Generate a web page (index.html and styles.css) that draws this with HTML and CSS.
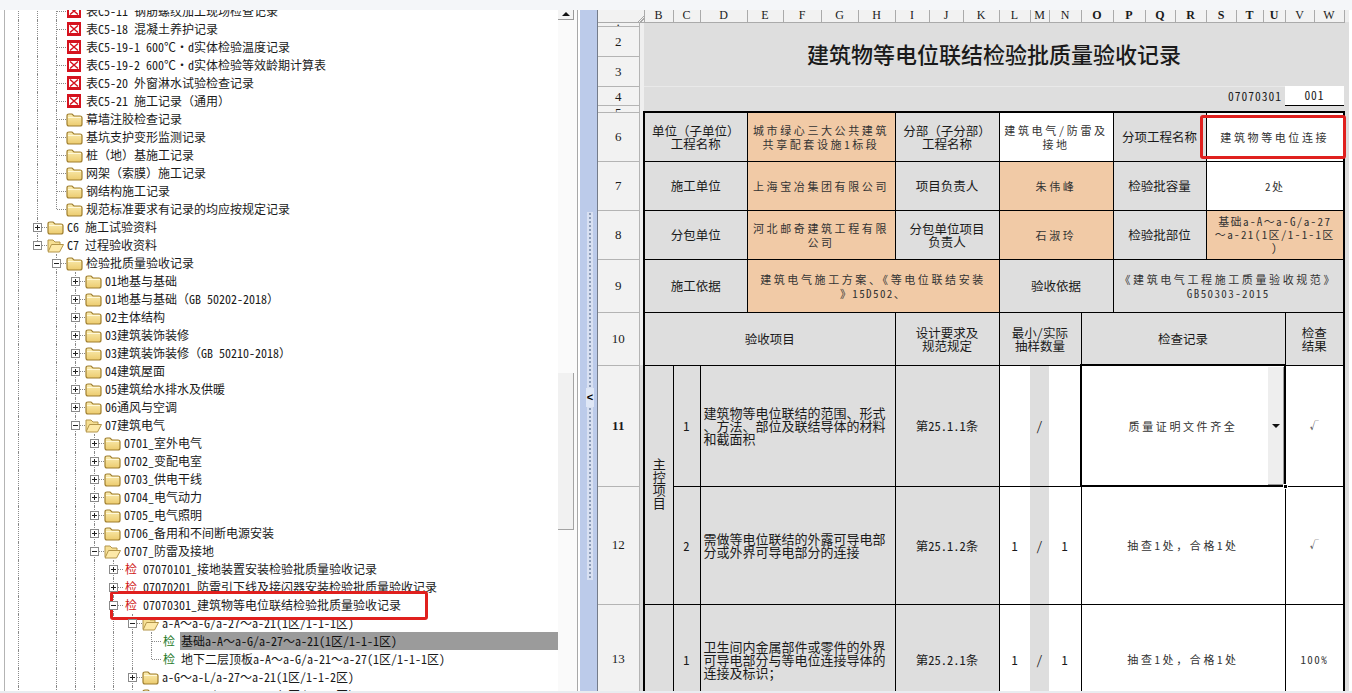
FILE: index.html
```html
<!DOCTYPE html>
<html lang="zh">

<head>
  <meta charset="utf-8">
  <title>检验批质量验收记录</title>
  <link rel="stylesheet" href="styles.css">
</head>

<body>
  <svg class="defs">
    <linearGradient id="tan" x1="0" y1="0" x2="0" y2="1">
      <stop offset="0" stop-color="#fbeeb4" />
      <stop offset="1" stop-color="#eccb6e" />
    </linearGradient>
    <symbol id="folder" viewBox="0 0 17 15">
      <path d="M1 4Q1 2 3 2H6L8 4H14Q16 4 16 6V12Q16 14 14 14H3Q1 14 1 12Z" fill="url(#tan)" stroke="#a07f2e" stroke-width="1.200" />
      <path d="M2 5.500H15" stroke="#fff8d8" />
    </symbol>
    <symbol id="open" viewBox="0 0 17 15">
      <path d="M1 13V2H6L8 4H13V6" fill="#f6df93" stroke="#b3954a" />
      <path d="M1 14L4.500 6.500H16.500L12.500 14Z" fill="#fde9a8" stroke="#b3954a" />
    </symbol>
    <symbol id="xbox" viewBox="0 0 14 14">
      <rect width="14" height="14" fill="#d5121e" />
      <rect x="2" y="3" width="10" height="8" fill="#fff" />
      <path d="M3 3.500L11 10.500M11 3.500L3 10.500" stroke="#d5121e" stroke-width="1.500" />
    </symbol>
  </svg>

  <div class="topbar"></div>

  <div class="app">
    <div class="tree-pane">
      <div class="tree">
        <div class="row"><i class="c g"></i><i class="c g"></i><i class="c tee"></i><svg class="ico x"><use href="#xbox" /></svg><span>表C5-11 钢筋螺纹加工现场检查记录</span></div>
        <div class="row"><i class="c g"></i><i class="c g"></i><i class="c tee"></i><svg class="ico x"><use href="#xbox" /></svg><span>表C5-18 混凝土养护记录</span></div>
        <div class="row"><i class="c g"></i><i class="c g"></i><i class="c tee"></i><svg class="ico x"><use href="#xbox" /></svg><span>表C5-19-1 600℃·d实体检验温度记录</span></div>
        <div class="row"><i class="c g"></i><i class="c g"></i><i class="c tee"></i><svg class="ico x"><use href="#xbox" /></svg><span>表C5-19-2 600℃·d实体检验等效龄期计算表</span></div>
        <div class="row"><i class="c g"></i><i class="c g"></i><i class="c tee"></i><svg class="ico x"><use href="#xbox" /></svg><span>表C5-20 外窗淋水试验检查记录</span></div>
        <div class="row"><i class="c g"></i><i class="c g"></i><i class="c tee"></i><svg class="ico x"><use href="#xbox" /></svg><span>表C5-21 施工记录（通用）</span></div>
        <div class="row"><i class="c g"></i><i class="c g"></i><i class="c tee"></i><svg class="ico"><use href="#folder" /></svg><span>幕墙注胶检查记录</span></div>
        <div class="row"><i class="c g"></i><i class="c g"></i><i class="c tee"></i><svg class="ico"><use href="#folder" /></svg><span>基坑支护变形监测记录</span></div>
        <div class="row"><i class="c g"></i><i class="c g"></i><i class="c tee"></i><svg class="ico"><use href="#folder" /></svg><span>桩（地）基施工记录</span></div>
        <div class="row"><i class="c g"></i><i class="c g"></i><i class="c tee"></i><svg class="ico"><use href="#folder" /></svg><span>网架（索膜）施工记录</span></div>
        <div class="row"><i class="c g"></i><i class="c g"></i><i class="c tee"></i><svg class="ico"><use href="#folder" /></svg><span>钢结构施工记录</span></div>
        <div class="row"><i class="c g"></i><i class="c g"></i><i class="c ell"></i><svg class="ico"><use href="#folder" /></svg><span>规范标准要求有记录的均应按规定记录</span></div>
        <div class="row"><i class="c g"></i><i class="c tee"><b class="box plus"></b></i><svg class="ico"><use href="#folder" /></svg><span>C6 施工试验资料</span></div>
        <div class="row"><i class="c g"></i><i class="c ell"><b class="box"></b></i><svg class="ico"><use href="#open" /></svg><span>C7 过程验收资料</span></div>
        <div class="row"><i class="c g"></i><i class="c"></i><i class="c tee"><b class="box"></b></i><svg class="ico"><use href="#folder" /></svg><span>检验批质量验收记录</span></div>
        <div class="row"><i class="c g"></i><i class="c"></i><i class="c g"></i><i class="c tee"><b class="box plus"></b></i><svg class="ico"><use href="#folder" /></svg><span>01地基与基础</span></div>
        <div class="row"><i class="c g"></i><i class="c"></i><i class="c g"></i><i class="c tee"><b class="box plus"></b></i><svg class="ico"><use href="#folder" /></svg><span>01地基与基础（GB 50202-2018）</span></div>
        <div class="row"><i class="c g"></i><i class="c"></i><i class="c g"></i><i class="c tee"><b class="box plus"></b></i><svg class="ico"><use href="#folder" /></svg><span>02主体结构</span></div>
        <div class="row"><i class="c g"></i><i class="c"></i><i class="c g"></i><i class="c tee"><b class="box plus"></b></i><svg class="ico"><use href="#folder" /></svg><span>03建筑装饰装修</span></div>
        <div class="row"><i class="c g"></i><i class="c"></i><i class="c g"></i><i class="c tee"><b class="box plus"></b></i><svg class="ico"><use href="#folder" /></svg><span>03建筑装饰装修（GB 50210-2018）</span></div>
        <div class="row"><i class="c g"></i><i class="c"></i><i class="c g"></i><i class="c tee"><b class="box plus"></b></i><svg class="ico"><use href="#folder" /></svg><span>04建筑屋面</span></div>
        <div class="row"><i class="c g"></i><i class="c"></i><i class="c g"></i><i class="c tee"><b class="box plus"></b></i><svg class="ico"><use href="#folder" /></svg><span>05建筑给水排水及供暖</span></div>
        <div class="row"><i class="c g"></i><i class="c"></i><i class="c g"></i><i class="c tee"><b class="box plus"></b></i><svg class="ico"><use href="#folder" /></svg><span>06通风与空调</span></div>
        <div class="row"><i class="c g"></i><i class="c"></i><i class="c g"></i><i class="c tee"><b class="box"></b></i><svg class="ico"><use href="#open" /></svg><span>07建筑电气</span></div>
        <div class="row"><i class="c g"></i><i class="c"></i><i class="c g"></i><i class="c g"></i><i class="c tee"><b class="box plus"></b></i><svg class="ico"><use href="#folder" /></svg><span>0701_室外电气</span></div>
        <div class="row"><i class="c g"></i><i class="c"></i><i class="c g"></i><i class="c g"></i><i class="c tee"><b class="box plus"></b></i><svg class="ico"><use href="#folder" /></svg><span>0702_变配电室</span></div>
        <div class="row"><i class="c g"></i><i class="c"></i><i class="c g"></i><i class="c g"></i><i class="c tee"><b class="box plus"></b></i><svg class="ico"><use href="#folder" /></svg><span>0703_供电干线</span></div>
        <div class="row"><i class="c g"></i><i class="c"></i><i class="c g"></i><i class="c g"></i><i class="c tee"><b class="box plus"></b></i><svg class="ico"><use href="#folder" /></svg><span>0704_电气动力</span></div>
        <div class="row"><i class="c g"></i><i class="c"></i><i class="c g"></i><i class="c g"></i><i class="c tee"><b class="box plus"></b></i><svg class="ico"><use href="#folder" /></svg><span>0705_电气照明</span></div>
        <div class="row"><i class="c g"></i><i class="c"></i><i class="c g"></i><i class="c g"></i><i class="c tee"><b class="box plus"></b></i><svg class="ico"><use href="#folder" /></svg><span>0706_备用和不间断电源安装</span></div>
        <div class="row"><i class="c g"></i><i class="c"></i><i class="c g"></i><i class="c g"></i><i class="c tee"><b class="box"></b></i><svg class="ico"><use href="#open" /></svg><span>0707_防雷及接地</span></div>
        <div class="row"><i class="c g"></i><i class="c"></i><i class="c g"></i><i class="c g"></i><i class="c g"></i><i class="c tee"><b class="box plus"></b></i><em class="jian">检</em><span>07070101_接地装置安装检验批质量验收记录</span></div>
        <div class="row"><i class="c g"></i><i class="c"></i><i class="c g"></i><i class="c g"></i><i class="c g"></i><i class="c tee"><b class="box plus"></b></i><em class="jian">检</em><span>07070201_防雷引下线及接闪器安装检验批质量验收记录</span></div>
        <div class="row"><i class="c g"></i><i class="c"></i><i class="c g"></i><i class="c g"></i><i class="c g"></i><i class="c tee"><b class="box"></b></i><em class="jian">检</em><span>07070301_建筑物等电位联结检验批质量验收记录</span></div>
        <div class="row"><i class="c g"></i><i class="c"></i><i class="c g"></i><i class="c g"></i><i class="c g"></i><i class="c g"></i><i class="c tee"><b class="box"></b></i><svg class="ico"><use href="#open" /></svg><span>a-A～a-G/a-27～a-21(1区/1-1-1区)</span></div>
        <div class="row"><i class="c g"></i><i class="c"></i><i class="c g"></i><i class="c g"></i><i class="c g"></i><i class="c g"></i><i class="c g"></i><i class="c tee"></i><em class="jian ok">检</em><span class="sel">基础a-A～a-G/a-27～a-21(1区/1-1-1区)</span></div>
        <div class="row"><i class="c g"></i><i class="c"></i><i class="c g"></i><i class="c g"></i><i class="c g"></i><i class="c g"></i><i class="c g"></i><i class="c ell"></i><em class="jian ok">检</em><span>地下二层顶板a-A～a-G/a-21～a-27(1区/1-1-1区)</span></div>
        <div class="row"><i class="c g"></i><i class="c"></i><i class="c g"></i><i class="c g"></i><i class="c g"></i><i class="c g"></i><i class="c tee"><b class="box plus"></b></i><svg class="ico"><use href="#folder" /></svg><span>a-G～a-L/a-27～a-21(1区/1-1-2区)</span></div>
        <div class="row"><i class="c g"></i><i class="c"></i><i class="c g"></i><i class="c g"></i><i class="c g"></i><i class="c g"></i><i class="c tee"><b class="box plus"></b></i><svg class="ico"><use href="#folder" /></svg><span>a-L～a-G/a-27～a-21(1区/1-1-1区)</span></div>
      </div>
      <div class="vscroll">
        <div class="up"></div>
        <div class="thumb"></div>
      </div>
    </div>

    <div class="split">
      <div class="grip grip-top"></div>
      <div class="collapse">&lt;</div>
      <div class="grip grip-bottom"></div>
    </div>

    <div class="sheet">
      <table class="grid">
        <colgroup>
          <col class="w-rh"><col class="w-a">
          <col class="w-29"><col class="w-27"><col class="w-47"><col class="w-36"><col class="w-38"><col class="w-37"><col class="w-37">
          <col class="w-34"><col class="w-34"><col class="w-36"><col class="w-31"><col class="w-19"><col class="w-32"><col class="w-32">
          <col class="w-32"><col class="w-30"><col class="w-31"><col class="w-30"><col class="w-27"><col class="w-22"><col class="w-29"><col class="w-30">
          <col class="w-a">
        </colgroup>
        <tr class="h-12 letters">
          <th colspan="2" class="corner"></th>
          <th>B</th><th>C</th><th>D</th><th>E</th><th>F</th><th>G</th><th>H</th><th>I</th><th>J</th><th>K</th><th>L</th><th>M</th><th>N</th>
          <th class="cur">O</th><th class="cur">P</th><th class="cur">Q</th><th class="cur">R</th><th class="cur">S</th><th class="cur">T</th><th class="cur">U</th><th>V</th><th>W</th>
          <th class="blank"></th>
        </tr>
        <tr class="h-4">
          <td class="rh"><div class="clip-4">·</div></td><td class="a"></td><td colspan="22" class="gray"></td><td class="x"></td>
        </tr>
        <tr class="h-30">
          <td class="rh nudge">2</td><td class="a"></td><td colspan="22" rowspan="2" class="gray title">建筑物等电位联结检验批质量验收记录</td><td class="x"></td>
        </tr>
        <tr class="h-30">
          <td class="rh nudge">3</td><td class="a"></td><td class="x"></td>
        </tr>
        <tr class="h-19">
          <td class="rh nudge">4</td><td class="a"></td><td colspan="20" class="gray code">07070301</td><td colspan="2" class="serial">001</td><td class="x"></td>
        </tr>
        <tr class="h-7">
          <td class="rh"><div class="clip-6">5</div></td><td class="a"></td><td colspan="22" class="gray top-edge"></td><td class="x"></td>
        </tr>
        <tr class="h-49">
          <td class="rh">6</td><td class="a"></td>
          <td colspan="3" class="f start gray">单位（子单位）<br>工程名称</td>
          <td colspan="4" class="f peach val">城市绿心三大公共建筑<br>共享配套设施1标段</td>
          <td colspan="3" class="f gray">分部（子分部）<br>工程名称</td>
          <td colspan="4" class="f val">建筑电气/防雷及<br>接地</td>
          <td colspan="3" class="f gray">分项工程名称</td>
          <td colspan="5" class="f val end">建筑物等电位连接</td>
          <td class="x"></td>
        </tr>
        <tr class="h-49">
          <td class="rh">7</td><td class="a"></td>
          <td colspan="3" class="f start gray">施工单位</td>
          <td colspan="4" class="f peach val">上海宝冶集团有限公司</td>
          <td colspan="3" class="f gray">项目负责人</td>
          <td colspan="4" class="f peach val">朱伟峰</td>
          <td colspan="3" class="f gray">检验批容量</td>
          <td colspan="5" class="f val lat end">2处</td>
          <td class="x"></td>
        </tr>
        <tr class="h-49">
          <td class="rh">8</td><td class="a"></td>
          <td colspan="3" class="f start gray">分包单位</td>
          <td colspan="4" class="f peach val">河北邮奇建筑工程有限<br>公司</td>
          <td colspan="3" class="f gray">分包单位项目<br>负责人</td>
          <td colspan="4" class="f peach val">石淑玲</td>
          <td colspan="3" class="f gray">检验批部位</td>
          <td colspan="5" class="f peach val lat tight end">基础a-A～a-G/a-27<br>～a-21(1区/1-1-1区<br>)</td>
          <td class="x"></td>
        </tr>
        <tr class="h-53">
          <td class="rh">9</td><td class="a"></td>
          <td colspan="3" class="f start gray">施工依据</td>
          <td colspan="7" class="f peach val">建筑电气施工方案、《等电位联结安装<br><span class="lat">》15D502、</span></td>
          <td colspan="4" class="f gray">验收依据</td>
          <td colspan="8" class="f gray val end">《建筑电气工程施工质量验收规范》<br><span class="lat">GB50303-2015</span></td>
          <td class="x"></td>
        </tr>
        <tr class="h-53">
          <td class="rh">10</td><td class="a"></td>
          <td colspan="7" class="f start gray">验收项目</td>
          <td colspan="3" class="f gray">设计要求及<br>规范规定</td>
          <td colspan="3" class="f gray">最小/实际<br>抽样数量</td>
          <td colspan="7" class="f gray">检查记录</td>
          <td colspan="2" class="f gray end">检查<br>结果</td>
          <td class="x"></td>
        </tr>
        <tr class="h-121">
          <td class="rh cur">11</td><td class="a dim"></td>
          <td rowspan="2" class="f start gray vert"><span>主控项目</span></td>
          <td class="f gray">1</td>
          <td colspan="5" class="f gray item">建筑物等电位联结的范围、形式、方法、部位及联结导体的材料和截面积</td>
          <td colspan="3" class="f gray">第25.1.1条</td>
          <td class="f no-r"></td><td class="f gray no-x">/</td><td class="f no-l"></td>
          <td colspan="7" class="f val active">质量证明文件齐全<div class="drop"></div><div class="handle"></div></td>
          <td colspan="2" class="f val tick end">√</td>
          <td class="x"></td>
        </tr>
        <tr class="h-118">
          <td class="rh">12</td><td class="a dim"></td>
          <td class="f gray">2</td>
          <td colspan="5" class="f gray item">需做等电位联结的外露可导电部分或外界可导电部分的连接</td>
          <td colspan="3" class="f gray">第25.1.2条</td>
          <td class="f no-r">1</td><td class="f gray no-x">/</td><td class="f no-l">1</td>
          <td colspan="7" class="f val">抽查1处，合格1处</td>
          <td colspan="2" class="f val tick end">√</td>
          <td class="x"></td>
        </tr>
        <tr class="h-110">
          <td class="rh">13</td><td class="a dim"></td>
          <td class="f start gray"></td>
          <td class="f gray">1</td>
          <td colspan="5" class="f gray item">卫生间内金属部件或零件的外界可导电部分与等电位连接导体的连接及标识；</td>
          <td colspan="3" class="f gray">第25.2.1条</td>
          <td class="f no-r">1</td><td class="f gray no-x">/</td><td class="f no-l">1</td>
          <td colspan="7" class="f val">抽查1处，合格1处</td>
          <td colspan="2" class="f val lat end">100%</td>
          <td class="x"></td>
        </tr>
      </table>
    </div>
  </div>

  <div class="bottombar"></div>

  <div class="mark mark-tree"></div>
  <div class="mark mark-form"></div>
</body>

</html>
```

FILE: styles.css
```css
* {
  box-sizing: border-box;
}

body {
  margin: 0;
  height: 693px;
  overflow: hidden;
  display: flex;
  flex-direction: column;
  background: #fff;
  color: #1a1a1a;
  font-family: "Noto Sans Mono CJK SC", "Noto Sans CJK SC", "Liberation Mono", monospace;
  font-size: 12px;
}

.defs {
  position: absolute;
  width: 0;
  height: 0;
}

.topbar {
  height: 10px;
  flex: none;
  background: #f4f6f9;
}

.bottombar {
  height: 2px;
  flex: none;
  background: #e9ecf0;
}

.app {
  flex: 1;
  display: flex;
  min-height: 0;
}

/* left tree */
.tree-pane {
  width: 574px;
  flex: none;
  display: flex;
  margin-left: 4px;
  border-left: 1px solid #b4b4b4;
  overflow: hidden;
}

.tree {
  flex: 1;
  min-width: 0;
  margin-top: -8px;
  padding-left: 4px;
  overflow: hidden;
}

.row {
  display: flex;
  align-items: center;
  height: 18px;
  white-space: pre;
  line-height: 18px;
}

.c {
  position: relative;
  display: block;
  flex: none;
  width: 19px;
  height: 18px;
}

.g::before,
.tee::before,
.ell::before {
  content: "";
  position: absolute;
  left: 9px;
  top: 0;
  bottom: 0;
  border-left: 1px dotted #8a8a8a;
}

.ell::before {
  bottom: 9px;
}

.tee::after,
.ell::after {
  content: "";
  position: absolute;
  left: 10px;
  top: 9px;
  width: 9px;
  border-top: 1px dotted #8a8a8a;
}

.box {
  position: absolute;
  z-index: 1;
  left: 5px;
  top: 5px;
  width: 9px;
  height: 9px;
  border: 1px solid #8a8a8a;
  background: linear-gradient(#222, #222) center / 5px 1px no-repeat, #fff;
}

.box.plus {
  background: linear-gradient(#222, #222) center / 5px 1px no-repeat, linear-gradient(#222, #222) center / 1px 5px no-repeat, #fff;
}

.ico {
  flex: none;
  width: 17px;
  height: 15px;
  margin: 0 3px 0 0;
}

.ico.x {
  width: 14px;
  height: 14px;
  margin: 0 5px 0 1px;
}

.jian {
  flex: none;
  width: 18px;
  padding-left: 2px;
  margin-right: 2px;
  font-style: normal;
  color: #d01818;
}

.jian.ok {
  color: #1f7a2a;
}

.sel {
  flex: 1;
  background: #9b9b9b;
  color: #111;
  height: 18px;
  margin-left: -1px;
  padding-left: 1px;
}

.vscroll {
  width: 20px;
  flex: none;
  padding-right: 3px;
  background: #fafafa;
  border-right: 1px solid #a8a8a8;
}

.up {
  height: 10px;
  border-right: 1px solid #999;
  border-bottom: 1px solid #999;
  background: #f4f4f4;
  position: relative;
}

.up::after {
  content: "";
  position: absolute;
  left: 4px;
  top: 2px;
  border: 4px solid transparent;
  border-top: 0;
  border-bottom: 4px solid #111;
}

.thumb {
  height: 157px;
  margin-top: 353px;
  background: #f1f1f1;
  border-right: 1px solid #a3a3a3;
  border-bottom: 1px solid #a3a3a3;
}

/* splitter */
.split {
  width: 20px;
  flex: none;
  padding: 202px 4px 0 9px;
  background: linear-gradient(to right, #fff 2px, #bccbea 2px);
  border-right: 1px solid #737b8a;
}

.grip {
  width: 6px;
  background: radial-gradient(circle, #8d9db8 1.2px, #d8e0f2 1.4px) 0 0 / 6px 4px;
}

.grip-top {
  height: 176px;
}

.grip-bottom {
  height: 173px;
}

.collapse {
  width: 8px;
  height: 19px;
  margin-left: -1px;
  background: #dfe7f6;
  color: #000;
  font-family: "Liberation Sans", sans-serif;
  font-weight: bold;
  font-size: 11px;
  line-height: 19px;
  text-align: center;
}

/* sheet */
.sheet {
  flex: 1;
  min-width: 0;
  overflow: hidden;
}

.grid {
  table-layout: fixed;
  border-collapse: collapse;
  width: 751px;
}

.grid th,
.grid td {
  padding: 0;
  text-align: center;
  font-weight: normal;
}

.w-rh { width: 41px; }
.w-a { width: 5px; }
.w-19 { width: 19px; }
.w-22 { width: 22px; }
.w-27 { width: 27px; }
.w-29 { width: 29px; }
.w-30 { width: 30px; }
.w-31 { width: 31px; }
.w-32 { width: 32px; }
.w-34 { width: 34px; }
.w-36 { width: 36px; }
.w-37 { width: 37px; }
.w-38 { width: 38px; }
.w-47 { width: 47px; }

.h-4 { height: 4px; }
.h-7 { height: 7px; }
.h-12 { height: 12px; }
.h-19 { height: 19px; }
.h-30 { height: 30px; }
.h-49 { height: 49px; }
.h-53 { height: 53px; }
.h-110 { height: 110px; }
.h-118 { height: 118px; }
.h-121 { height: 121px; }

.letters th {
  background: #f2f2f2;
  border-right: 1px solid #aaa;
  border-bottom: 1px solid #aaa;
  font-family: "Liberation Serif", serif;
  font-size: 12px;
  line-height: 11px;
}

.letters th.cur {
  font-weight: bold;
}

.letters th.corner {
  background: linear-gradient(135deg, #f2f2f2 88%, #a8a8a8 88% 90%, #f2f2f2 90% 93%, #a8a8a8 93% 95%, #f2f2f2 95%);
}

.letters th.blank {
  border: 0;
  background: #eee;
}

.rh {
  background: #f2f2f2;
  border-right: 1px solid #b4b4b4;
  border-bottom: 1px solid #b4b4b4;
  font-family: "Liberation Serif", serif;
  font-size: 13px;
  line-height: 14px;
}

.grid td.nudge {
  padding-top: 2px;
}

.rh.cur {
  font-weight: bold;
}

.clip-4,
.clip-6 {
  overflow: hidden;
  line-height: 14px;
}

.clip-4 {
  height: 3px;
  line-height: 3px;
}

.clip-6 {
  height: 6px;
}

.a {
  background: #efefef;
}

.a.dim {
  background: #dcdcdc;
}

.x {
  background: #dedede;
}

.gray {
  background: #dedede;
}

.peach {
  background: #f1caa6;
}

.grid td.title {
  font-family: "Noto Sans CJK SC", sans-serif;
  font-size: 22px;
  font-weight: 500;
  padding-bottom: 5px;
}

.grid td.code {
  padding-right: 3px;
  text-align: right;
  font-size: 11.500px;
  letter-spacing: 1px;
  border-top: 1px solid #e9e9e9;
}

.serial {
  background: #fff;
  border-bottom: 1px solid #000;
  font-size: 11.500px;
  letter-spacing: 1px;
}

.top-edge {
  border-bottom: 2px solid #000;
}

.f {
  border: 1px solid #000;
  font-size: 12.500px;
  line-height: 13px;
  overflow: hidden;
}

.start {
  border-left-width: 2px;
}

.end {
  border-right-width: 2px;
}

.val {
  font-size: 11px;
  letter-spacing: 2.600px;
  color: #333;
  line-height: 14px;
}

.lat {
  letter-spacing: 1.400px;
}

.tight {
  line-height: 13px;
}

.tick {
  font-size: 9px;
  letter-spacing: 0;
}

.grid td.item {
  padding-left: 3px;
  font-size: 13px;
  line-height: 13px;
  text-align: left;
  line-break: anywhere;
}

.vert span {
  writing-mode: vertical-rl;
  display: inline-block;
  font-size: 13px;
  letter-spacing: 0;
  line-height: 14px;
}

.no-r {
  border-right: 0;
}

.no-l {
  border-left: 0;
}

.no-x {
  border-left: 0;
  border-right: 0;
}

.active {
  position: relative;
  overflow: visible;
  outline: 2px solid #000;
  outline-offset: -1px;
}

.drop {
  position: absolute;
  top: 1px;
  right: 1px;
  bottom: 1px;
  width: 16px;
  background: #eee;
  border-right: 1px solid #999;
  border-bottom: 1px solid #999;
}

.drop::after {
  content: "";
  position: absolute;
  left: 4px;
  top: 57px;
  border: 4px solid transparent;
  border-bottom: 0;
  border-top: 4px solid #111;
}

.handle {
  position: absolute;
  right: -3px;
  bottom: -3px;
  width: 5px;
  height: 5px;
  background: #000;
  border: 1px solid #fff;
}

/* red notes drawn on top of the screenshot */
.mark {
  position: absolute;
  border: 3px solid #e0201e;
  border-radius: 3px;
}

.mark-tree {
  left: 110px;
  top: 591px;
  width: 318px;
  height: 29px;
}

.mark-form {
  left: 1200px;
  top: 115px;
  width: 146px;
  height: 44px;
}
```
